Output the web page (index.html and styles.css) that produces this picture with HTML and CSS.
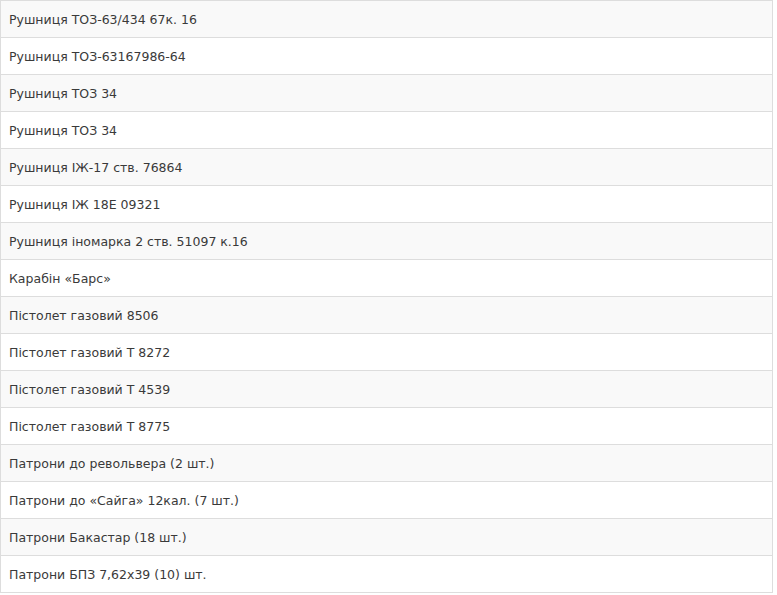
FILE: index.html
```html
<!DOCTYPE html>
<html lang="uk">
<head>
<meta charset="utf-8">
<link rel="stylesheet" href="styles.css">
</head>
<body>
<table class="list">
<tbody>
<tr><td>Рушниця ТОЗ-63/434 67к. 16</td></tr>
<tr><td>Рушниця ТОЗ-63167986-64</td></tr>
<tr><td>Рушниця ТОЗ 34</td></tr>
<tr><td>Рушниця ТОЗ 34</td></tr>
<tr><td>Рушниця ІЖ-17 ств. 76864</td></tr>
<tr><td>Рушниця ІЖ 18Е 09321</td></tr>
<tr><td>Рушниця іномарка 2 ств. 51097 к.16</td></tr>
<tr><td>Карабін «Барс»</td></tr>
<tr><td>Пістолет газовий 8506</td></tr>
<tr><td>Пістолет газовий Т 8272</td></tr>
<tr><td>Пістолет газовий Т 4539</td></tr>
<tr><td>Пістолет газовий Т 8775</td></tr>
<tr><td>Патрони до револьвера (2 шт.)</td></tr>
<tr><td>Патрони до «Сайга» 12кал. (7 шт.)</td></tr>
<tr><td>Патрони Бакастар (18 шт.)</td></tr>
<tr><td>Патрони БПЗ 7,62х39 (10) шт.</td></tr>
</tbody>
</table>
</body>
</html>
```
FILE: styles.css
```css
html, body {
  margin: 0;
  padding: 0;
  background: #ffffff;
}
.list {
  border-collapse: collapse;
  width: 773px;
  font-family: "DejaVu Sans", Verdana, sans-serif;
  font-size: 12.5px;
  color: #3a3a3a;
}
.list td {
  height: 37px;
  padding: 0 8px;
  border: 1px solid #dddddd;
  box-sizing: border-box;
  vertical-align: middle;
}
.list tr:nth-child(odd) td {
  background: #f9f9f9;
}
```
